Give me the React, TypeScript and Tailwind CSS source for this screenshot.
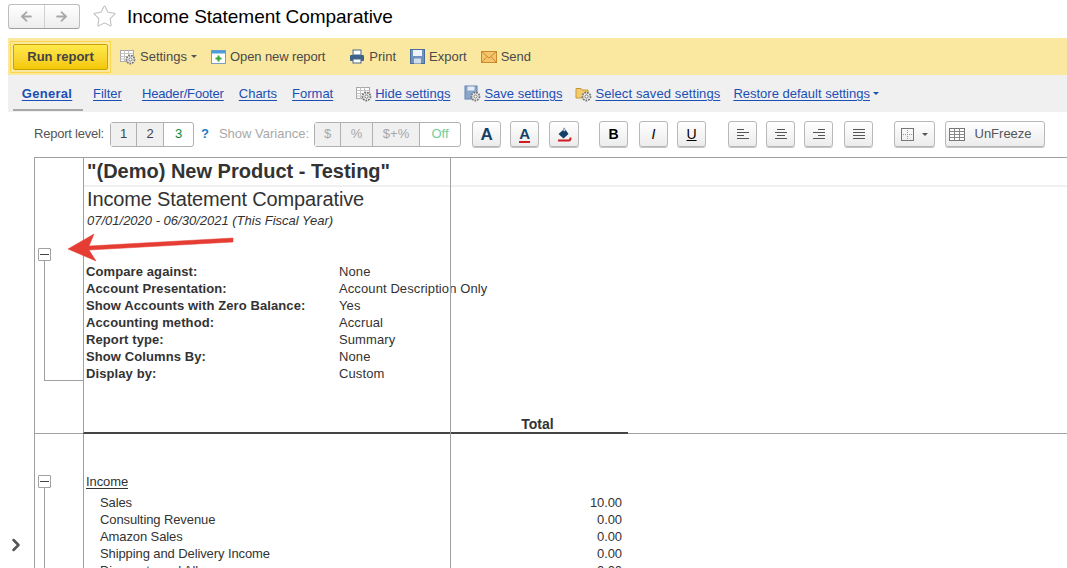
import { ArrowLeft, ArrowRight, ChevronRight, Star } from 'lucide-react';
import type { ReactNode } from 'react';

const meta = [
  ['Compare against:', 'None'],
  ['Account Presentation:', 'Account Description Only'],
  ['Show Accounts with Zero Balance:', 'Yes'],
  ['Accounting method:', 'Accrual'],
  ['Report type:', 'Summary'],
  ['Show Columns By:', 'None'],
  ['Display by:', 'Custom'],
];

const incomeRows = [
  ['Sales', '10.00'],
  ['Consulting Revenue', '0.00'],
  ['Amazon Sales', '0.00'],
  ['Shipping and Delivery Income', '0.00'],
  ['Discounts and Allowances', '0.00'],
];

function Cog() {
  return (
    <>
      <circle cx="11.5" cy="11.5" r="4" fill="#f4f4f4" stroke="#777" strokeWidth="1.8" strokeDasharray="1.8 0.9" />
      <circle cx="11.5" cy="11.5" r="1.6" fill="#fff" stroke="#777" />
    </>
  );
}

function GearGrid({ disk = false }: { disk?: boolean }) {
  return (
    <svg width="17" height="17" viewBox="0 0 17 17" className="shrink-0">
      {disk ? (
        <>
          <rect x="1" y="1" width="12" height="13" fill="#8aa6cc" stroke="#6582ad" />
          <rect x="3.5" y="1.5" width="7" height="4" fill="#e6edf6" />
        </>
      ) : (
        <>
          <rect x="1.5" y="2.5" width="13" height="11" fill="#fff" stroke="#a8a8a8" />
          <path d="M1.5 5.5h13M1.5 8.5h7M1.5 11h6M5.5 2.5v11M9.5 2.5v5" stroke="#c4c4c4" fill="none" />
        </>
      )}
      <Cog />
    </svg>
  );
}

function FolderGear() {
  return (
    <svg width="17" height="17" viewBox="0 0 17 17" className="shrink-0">
      <path d="M1 3.5h5l1 1.5h6v8H1z" fill="#f3cd6b" stroke="#c8963a" />
      <Cog />
    </svg>
  );
}

function Caret({ color = '#555' }: { color?: string }) {
  return (
    <svg width="6" height="3" viewBox="0 0 6 3" className="shrink-0">
      <path d="M0 0h6L3 3z" fill={color} />
    </svg>
  );
}

function ToolButton({ className, children }: { className: string; children: ReactNode }) {
  return (
    <div className={`flex h-[26px] items-center justify-center rounded-[3px] border border-[#b8b8b8] bg-gradient-to-b from-white to-[#ececec] shadow-[0_1px_0_#c4c4c4] ${className}`}>
      {children}
    </div>
  );
}

function AlignIcon({ lines }: { lines: string }) {
  return (
    <svg width="14" height="12" viewBox="0 0 14 12">
      <path d={lines} stroke="#555" fill="none" />
    </svg>
  );
}

function OutlineBox() {
  return (
    <div className="flex h-[13px] w-[13px] items-center justify-center rounded-[1px] border border-[#a0a0a0] bg-white">
      <div className="h-px w-[9px] bg-[#444]" />
    </div>
  );
}

function Link({ className = '', children }: { className?: string; children: ReactNode }) {
  return <span className={`text-[#1c4fb4] underline underline-offset-2 ${className}`}>{children}</span>;
}

export default function App() {
  return (
    <div className="flex h-[568px] w-full flex-col overflow-hidden bg-white font-['Liberation_Sans',Arial,sans-serif] text-[13px] text-[#333]">
      {/* title row */}
      <div className="flex h-[38px] shrink-0 items-start pl-2 pt-1">
        <div className="flex h-[25px] w-[72px] rounded-[3px] border border-[#bdbdbd] border-b-[#9e9e9e] bg-gradient-to-b from-white to-[#ededed]">
          <div className="flex flex-1 items-center justify-center border-r border-[#d0d0d0]">
            <ArrowLeft size={15} strokeWidth={3} color="#a8a8a8" />
          </div>
          <div className="flex flex-1 items-center justify-center">
            <ArrowRight size={15} strokeWidth={3} color="#a8a8a8" />
          </div>
        </div>
        <Star size={25} strokeWidth={1} color="#bdbdbd" className="ml-[12px]" />
        <div className="ml-[10px] mt-[1px] text-[19px] leading-[24px] tracking-[-0.05px] text-black">Income Statement Comparative</div>
      </div>

      {/* yellow command bar */}
      <div className="ml-2 flex h-[37px] shrink-0 items-center bg-[#fbe8a0] pl-[2px] text-[#4a4a4a]">
        <div className="border border-[#fcd74a] p-[2px]">
          <div className="flex h-[26px] w-[95px] items-center justify-center rounded-[2px] border border-[#c9a400] bg-gradient-to-b from-[#ffe94a] to-[#f4c800] font-bold text-[#444]">
            Run report
          </div>
        </div>
        <div className="ml-[8px]"><GearGrid /></div>
        <span className="ml-[4px]">Settings</span>
        <div className="ml-[4px]"><Caret /></div>
        <svg width="15" height="15" viewBox="0 0 15 15" className="ml-[14px]">
          <rect x="0.5" y="1.5" width="14" height="13" fill="#fff" stroke="#7d9fbe" />
          <rect x="0.5" y="1.5" width="14" height="3" fill="#4d9bd8" />
          <path d="M7.5 6.5v6M4.5 9.5h6" stroke="#3aa335" strokeWidth="2" />
        </svg>
        <span className="ml-[4px] tracking-[-0.1px]">Open new report</span>
        <svg width="16" height="15" viewBox="0 0 16 15" className="ml-[24px]">
          <rect x="4" y="1" width="8" height="5" fill="#fff" stroke="#48678c" />
          <rect x="1" y="6" width="14" height="6" rx="1" fill="#3f6288" />
          <rect x="4" y="10" width="8" height="4" fill="#fff" stroke="#48678c" />
        </svg>
        <span className="ml-[4px]">Print</span>
        <svg width="15" height="15" viewBox="0 0 15 15" className="ml-[14px]">
          <rect x="0.5" y="0.5" width="14" height="14" fill="#6f93c0" stroke="#4a6c99" />
          <rect x="3" y="1" width="9" height="6" fill="#eef3f9" />
          <rect x="4" y="9.5" width="7" height="5" fill="#d5dde6" />
        </svg>
        <span className="ml-[4px]">Export</span>
        <svg width="16" height="12" viewBox="0 0 16 12" className="ml-[14px]">
          <rect x="0.5" y="0.5" width="15" height="11" fill="#f6c46b" stroke="#c98a2e" />
          <path d="M0.5 0.5L8 7l7.5-6.5M0.5 11.5L6 5.5M15.5 11.5L10 5.5" stroke="#c98a2e" fill="none" />
        </svg>
        <span className="ml-[4px]">Send</span>
      </div>

      {/* settings tabs */}
      <div className="ml-2 flex h-[37px] shrink-0 items-center bg-[#f0f0f0] pl-[5px]">
        <div className="flex h-[35px] w-[70px] items-center justify-center border-b-2 border-[#a9a9a9] pr-[2px] pt-[2px]">
          <Link className="font-bold tracking-[0.3px]">General</Link>
        </div>
        <Link className="ml-[10px]">Filter</Link>
        <Link className="ml-[20px] tracking-[-0.15px]">Header/Footer</Link>
        <Link className="ml-[15px]">Charts</Link>
        <Link className="ml-[15px]">Format</Link>
        <div className="ml-[22px]"><GearGrid /></div>
        <Link className="ml-[3px]">Hide settings</Link>
        <div className="ml-[14px]"><GearGrid disk /></div>
        <Link className="ml-[3px]">Save settings</Link>
        <div className="ml-[13px]"><FolderGear /></div>
        <Link className="ml-[3px] tracking-[0.1px]">Select saved settings</Link>
        <Link className="ml-[13px]">Restore default settings</Link>
        <div className="ml-[3px]"><Caret color="#1c4fb4" /></div>
      </div>

      {/* format toolbar */}
      <div className="flex h-[45px] shrink-0 items-center pb-px pl-[34px]">
        <span className="tracking-[-0.23px] text-[#555]">Report level:</span>
        <div className="ml-[6px] flex h-[25px] w-[84px] rounded-[3px] border border-[#b0b0b0] text-[#444]">
          <div className="flex w-[26px] items-center justify-center border-r border-[#b0b0b0] bg-[#f0f0f0]">1</div>
          <div className="flex w-[27px] items-center justify-center border-r border-[#b0b0b0] bg-[#f0f0f0]">2</div>
          <div className="flex flex-1 items-center justify-center text-[#0b8a3c]">3</div>
        </div>
        <span className="ml-[7px] font-bold text-[#1c7cc4]">?</span>
        <span className="ml-[10px] text-[#a8a8a8]">Show Variance:</span>
        <div className="ml-[5px] flex h-[25px] w-[147px] rounded-[3px] border border-[#b0b0b0] text-[#a8a8a8]">
          <div className="flex w-[26px] items-center justify-center border-r border-[#b0b0b0] bg-[#f0f0f0]">$</div>
          <div className="flex w-[32px] items-center justify-center border-r border-[#b0b0b0] bg-[#f0f0f0]">%</div>
          <div className="flex w-[47px] items-center justify-center border-r border-[#b0b0b0] bg-[#f0f0f0]">$+%</div>
          <div className="flex flex-1 items-center justify-center text-[#6fce9a]">Off</div>
        </div>
        <ToolButton className="ml-[11px] w-[29px]">
          <span className="text-[17px] font-bold leading-none text-[#143f66]">A</span>
        </ToolButton>
        <ToolButton className="ml-[9px] w-[29px]">
          <span className="border-b-2 border-[#cf1b24] text-[15px] font-bold leading-[15px] text-[#143f66]">A</span>
        </ToolButton>
        <ToolButton className="ml-[10px] w-[30px]">
          <svg width="16" height="15" viewBox="0 0 16 15">
            <path d="M8 0.5l-1 2.5-4.5 4 5 4.5 5-4.5z" fill="#143f66" />
            <path d="M8 1l2 2-1.5 1.5-1.5-1z" fill="#b8c4d0" />
            <path d="M2 13.5h11c1 0 1.5-1 1.5-3" stroke="#cf1b24" strokeWidth="2" fill="none" />
          </svg>
        </ToolButton>
        <ToolButton className="ml-[20px] w-[29px]"><span className="text-[14px] font-bold leading-none text-black">B</span></ToolButton>
        <ToolButton className="ml-[11px] w-[29px]"><span className="text-[14px] italic leading-none text-black">I</span></ToolButton>
        <ToolButton className="ml-[9px] w-[29px]"><span className="text-[14px] leading-none text-black underline">U</span></ToolButton>
        <ToolButton className="ml-[22px] w-[29px]"><AlignIcon lines="M1 1.5h7M1 4.5h12M1 7.5h7M1 10.5h12" /></ToolButton>
        <ToolButton className="ml-[9px] w-[29px]"><AlignIcon lines="M3 1.5h8M1 4.5h12M3 7.5h8M1 10.5h12" /></ToolButton>
        <ToolButton className="ml-[9px] w-[29px]"><AlignIcon lines="M6 1.5h7M1 4.5h12M6 7.5h7M1 10.5h12" /></ToolButton>
        <ToolButton className="ml-[11px] w-[29px]"><AlignIcon lines="M1 1.5h12M1 4.5h12M1 7.5h12M1 10.5h12" /></ToolButton>
        <ToolButton className="ml-[21px] w-[41px] gap-[8px]">
          <svg width="13" height="13" viewBox="0 0 13 13">
            <rect x="0.5" y="0.5" width="12" height="12" fill="none" stroke="#777" />
            <path d="M6.5 2v9M2 6.5h9" stroke="#999" strokeDasharray="1 1" />
          </svg>
          <Caret />
        </ToolButton>
        <ToolButton className="ml-[10px] w-[100px] gap-[10px] pr-[10px] text-[#555]">
          <svg width="16" height="13" viewBox="0 0 16 13">
            <rect x="0.5" y="0.5" width="15" height="12" fill="#fff" stroke="#777" />
            <path d="M0.5 3.5h15M0.5 6.5h15M0.5 9.5h15M5.5 0.5v12M10.5 0.5v12" stroke="#888" />
          </svg>
          UnFreeze
        </ToolButton>
      </div>

      {/* report */}
      <div className="flex min-h-0 flex-1">
        <div className="flex w-[34px] shrink-0 items-end justify-center pb-[13px]">
          <ChevronRight size={20} strokeWidth={3} color="#555" className="-ml-[3px]" />
        </div>
        <div className="relative min-w-0 flex-1 border-l border-t border-[#a0a0a0]">
          {/* report heading */}
          <div className="flex h-[276px] leading-[17px]">
            <div className="flex w-[48px] shrink-0 flex-col border-b border-[#a0a0a0] pl-[3px] pt-[90px]">
              <OutlineBox />
              <div className="ml-[6px] h-[120px] w-[39px] border-b border-l border-[#a0a0a0]" />
            </div>
            <div className="w-[367px] shrink-0 border-b-2 border-l border-b-[#444] border-l-[#a0a0a0]">
              <div className="h-[29px] whitespace-nowrap border-b-2 border-[#f0f0f0] pl-[3px] text-[20px] font-bold leading-[27px] text-[#333]">"(Demo) New Product - Testing"</div>
              <div className="-mt-px whitespace-nowrap pl-[3px] text-[20px] leading-[26px] tracking-[-0.15px]">Income Statement Comparative</div>
              <div className="mt-px whitespace-nowrap pl-[3px] italic leading-[16px]">07/01/2020 - 06/30/2021 (This Fiscal Year)</div>
              <div className="mt-[34px] pl-[2px] tracking-[0.1px]">
                {meta.map(([label, value]) => (
                  <div key={label} className="flex h-[17px] whitespace-nowrap">
                    <span className="w-[253px] shrink-0 font-bold">{label}</span>
                    <span>{value}</span>
                  </div>
                ))}
              </div>
            </div>
            <div className="relative flex min-w-0 flex-1 flex-col border-l border-[#a0a0a0]">
              <div className="h-[29px] border-b-2 border-[#f0f0f0]" />
              <div className="flex flex-1 items-end">
                <div className="w-[177px] border-b-2 border-[#444] pr-[4px] text-center text-[14px] font-bold leading-[15px]">Total</div>
                <div className="flex-1 border-b border-[#a0a0a0]" />
              </div>
            </div>
          </div>

          {/* income section */}
          <div className="flex h-[134px] leading-[17px]">
            <div className="flex w-[48px] shrink-0 flex-col pl-[3px] pt-[41px]">
              <OutlineBox />
              <div className="ml-[6px] w-px flex-1 bg-[#a0a0a0]" />
            </div>
            <div className="w-[367px] shrink-0 border-l border-[#a0a0a0] pl-[2px] pt-[39px] tracking-[-0.1px]">
              <div className="mb-[4px] underline underline-offset-2">Income</div>
              {incomeRows.map(([name]) => (
                <div key={name} className="h-[17px] whitespace-nowrap pl-[14px]">{name}</div>
              ))}
            </div>
            <div className="flex-1 border-l border-[#a0a0a0] pt-[60px] tracking-[-0.1px]">
              {incomeRows.map(([name, value]) => (
                <div key={name} className="h-[17px] w-[171px] text-right">{value}</div>
              ))}
            </div>
          </div>

          {/* callout arrow */}
          <svg width="170" height="30" viewBox="0 0 170 30" className="absolute left-[32px] top-[75px]">
            <path d="M1 16L27 1l-5 12 144-8v4l-144 8 7 11z" fill="#e53d33" stroke="#e53d33" strokeWidth="0.5" strokeLinejoin="round" />
          </svg>
        </div>
      </div>
    </div>
  );
}
